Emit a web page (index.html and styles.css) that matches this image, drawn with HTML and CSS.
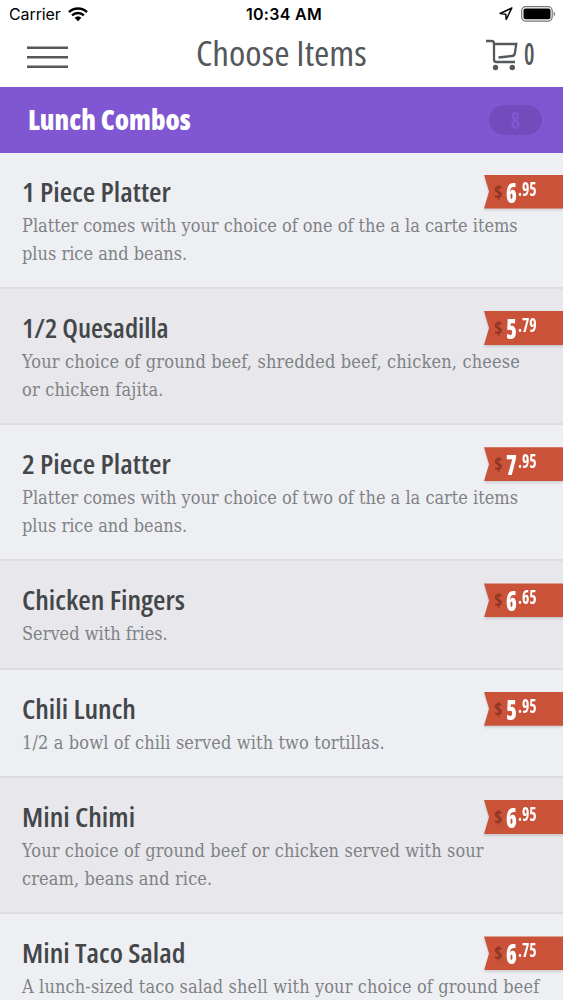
FILE: index.html
```html
<!DOCTYPE html>
<html lang="en">
<head>
    <meta charset="UTF-8">
    <meta name="viewport" content="width=device-width, initial-scale=1.0">
    <title>Choose Items</title>
    <link rel="stylesheet" href="styles.css">
</head>
<body>
    <div class="status-bar">
        <div class="carrier">
            <span>Carrier</span>
            <svg width="20" height="15" viewBox="0 0 20 15">
                <path d="M1 5.2a13 13 0 0 1 18 0M4.1 8.3a8.6 8.6 0 0 1 11.8 0" fill="none" stroke="#000" stroke-width="2.5"/>
                <path d="M10 14.2L6.6 10.8a5 5 0 0 1 6.8 0z"/>
            </svg>
        </div>
        <div class="time">10:34 AM</div>
        <div class="indicators">
            <svg width="14" height="14" viewBox="0 0 14 14">
                <path d="M12.8 1L1.2 6.5l5.6.8.4 5.2z" fill="none" stroke="#000" stroke-width="1.5" stroke-linejoin="round"/>
            </svg>
            <svg width="35" height="16" viewBox="0 0 35 16">
                <rect x=".7" y=".7" width="30.5" height="14.4" rx="4" fill="none" stroke="#777" stroke-width="1.2"/>
                <rect x="2.5" y="2.5" width="27" height="10.8" rx="2"/>
                <path d="M32.7 5.5c1.8.6 1.8 4.4 0 5z" fill="#777"/>
            </svg>
        </div>
    </div>

    <div class="nav-bar">
        <svg class="menu-btn" width="41" height="22" viewBox="0 0 41 22">
            <path d="M0 1.7h41M0 11.2h41M0 20.7h41" stroke="#54585a" stroke-width="2.5"/>
        </svg>
        <h1>Choose Items</h1>
        <div class="cart">
            <svg width="32" height="32" viewBox="0 0 32 32">
                <path d="M0 2h5.5q2.5 0 2.5 2.5v16q0 2.5 2.5 2.5h18.5M8 5h22.3l-1.5 9.5q-.4 2.3-2.8 2.5l-13.5 1.5" fill="none" stroke="#54585a" stroke-width="2.3"/>
                <circle cx="9.5" cy="28.5" r="2.7" fill="#54585a"/>
                <circle cx="26.3" cy="28.5" r="2.7" fill="#54585a"/>
            </svg>
            <span class="cart-count">0</span>
        </div>
    </div>

    <div class="category">
        <h2>Lunch Combos</h2>
        <div class="badge"><span>8</span></div>
    </div>

    <div class="menu-list">
        <div class="item">
            <h3>1 Piece Platter</h3>
            <p>Platter comes with your choice of one of the a la carte items<br>plus rice and beans.</p>
            <div class="price"><div class="tag"><i>$</i><b>6</b><sup>.95</sup></div></div>
        </div>
        <div class="item quesadilla">
            <h3>1/2 Quesadilla</h3>
            <p>Your choice of ground beef, shredded beef, chicken, cheese<br>or chicken fajita.</p>
            <div class="price"><div class="tag"><i>$</i><b>5</b><sup>.79</sup></div></div>
        </div>
        <div class="item">
            <h3>2 Piece Platter</h3>
            <p>Platter comes with your choice of two of the a la carte items<br>plus rice and beans.</p>
            <div class="price"><div class="tag"><i>$</i><b>7</b><sup>.95</sup></div></div>
        </div>
        <div class="item">
            <h3>Chicken Fingers</h3>
            <p>Served with fries.</p>
            <div class="price"><div class="tag"><i>$</i><b>6</b><sup>.65</sup></div></div>
        </div>
        <div class="item loose">
            <h3>Chili Lunch</h3>
            <p>1/2 a bowl of chili served with two tortillas.</p>
            <div class="price"><div class="tag"><i>$</i><b>5</b><sup>.95</sup></div></div>
        </div>
        <div class="item loose">
            <h3>Mini Chimi</h3>
            <p>Your choice of ground beef or chicken served with sour<br>cream, beans and rice.</p>
            <div class="price"><div class="tag"><i>$</i><b>6</b><sup>.95</sup></div></div>
        </div>
        <div class="item loose">
            <h3>Mini Taco Salad</h3>
            <p>A lunch-sized taco salad shell with your choice of ground beef</p>
            <div class="price"><div class="tag"><i>$</i><b>6</b><sup>.75</sup></div></div>
        </div>
    </div>
</body>
</html>
```

FILE: styles.css
```css
* {
    box-sizing: border-box;
}
body {
    margin: 0;
    height: 1000px;
    overflow: hidden;
    background-color: #fff;
    font-family: "Open Sans", "Noto Sans", sans-serif;
    font-stretch: 75%;
}
h1, h2, h3, p {
    margin: 0;
    white-space: nowrap;
}

/* status bar */
.status-bar {
    display: grid;
    grid-template-columns: 1fr auto 1fr;
    align-items: center;
    height: 28px;
    padding: 0 7px 0 9px;
    font-family: Inter, sans-serif;
    font-stretch: normal;
    font-size: 16px;
    color: #000;
}
.carrier {
    display: flex;
    align-items: center;
    gap: 7px;
    letter-spacing: -0.1px;
}
.time {
    padding-left: 3px;
    font-weight: 600;
    letter-spacing: 0.3px;
}
.indicators {
    display: flex;
    justify-content: flex-end;
    align-items: center;
    gap: 8px;
}

/* nav bar */
.nav-bar {
    display: grid;
    grid-template-columns: 1fr auto 1fr;
    align-items: center;
    height: 59px;
    padding: 0 28px 0 27px;
    color: #54585a;
}
.menu-btn {
    margin-top: -2px;
}
.nav-bar h1 {
    font-size: 34px;
    font-weight: 400;
    line-height: 50px;
    margin-top: -10px;
    transform: scaleX(1.09);
}
.cart {
    display: flex;
    justify-content: flex-end;
    align-items: center;
    gap: 6px;
    margin-top: -6px;
}
.cart-count {
    width: 11px;
    font-size: 30px;
    font-weight: 600;
    line-height: 32px;
    margin-top: -2px;
    transform: scaleX(0.78);
    transform-origin: left;
}

/* category header */
.category {
    display: flex;
    justify-content: space-between;
    align-items: center;
    height: 65.6px;
    padding: 0 21px 0 28px;
    background-color: #8156d2;
    color: #fff;
}
.category h2 {
    font-size: 28px;
    font-weight: 800;
    margin-top: -1px;
    transform: scaleX(0.99);
    transform-origin: left;
}
.badge {
    display: flex;
    justify-content: center;
    align-items: center;
    width: 53px;
    height: 30px;
    border-radius: 15px;
    background-color: #744bbc;
    color: #8156d2;
    font-size: 23px;
    font-weight: 700;
}
.badge span {
    transform: scaleX(0.85);
}

/* menu items */
.item {
    display: grid;
    grid-template-columns: 1fr 79px;
    padding: 21px 0 19.3px 22px;
    background-color: #eeeff3;
    border-bottom: 2px solid #dcdce2;
}
.item:nth-child(even) {
    background-color: #e8e7eb;
}
.item h3 {
    font-size: 27px;
    font-weight: 600;
    line-height: 36px;
    color: #43474a;
    transform: scaleX(1.06);
    transform-origin: left;
    justify-self: start;
}
.item p {
    grid-column: 1 / 3;
    grid-row: 2;
    margin-top: 2px;
    font-family: "DejaVu Serif Condensed", "DejaVu Serif", serif;
    font-size: 18px;
    line-height: 28px;
    color: #7e8285;
}
.item.quesadilla h3 {
    transform: scaleX(1.02);
}
.quesadilla p {
    letter-spacing: 0.17px;
}
.loose p {
    letter-spacing: 0.13px;
}

/* price ribbon */
.price {
    grid-column: 2;
    margin-top: 1px;
    filter: drop-shadow(0 2px 1px rgba(0, 0, 0, 0.12));
}
.tag {
    display: flex;
    height: 34px;
    padding-left: 10px;
    background-color: #ca5239;
    clip-path: polygon(0 0, 100% 0, 100% 100%, 0 100%, 5px 50%);
    color: #fff;
}
.tag i {
    width: 12px;
    font-size: 18px;
    font-style: normal;
    font-weight: 700;
    line-height: 35px;
    color: #903521;
}
.tag b {
    width: 12px;
    font-size: 28px;
    font-weight: 800;
    line-height: 34px;
    transform: scaleX(0.78);
    transform-origin: left;
}
.tag sup {
    font-size: 19px;
    font-weight: 700;
    line-height: 28px;
    transform: scaleX(0.82);
    transform-origin: left;
}
```
